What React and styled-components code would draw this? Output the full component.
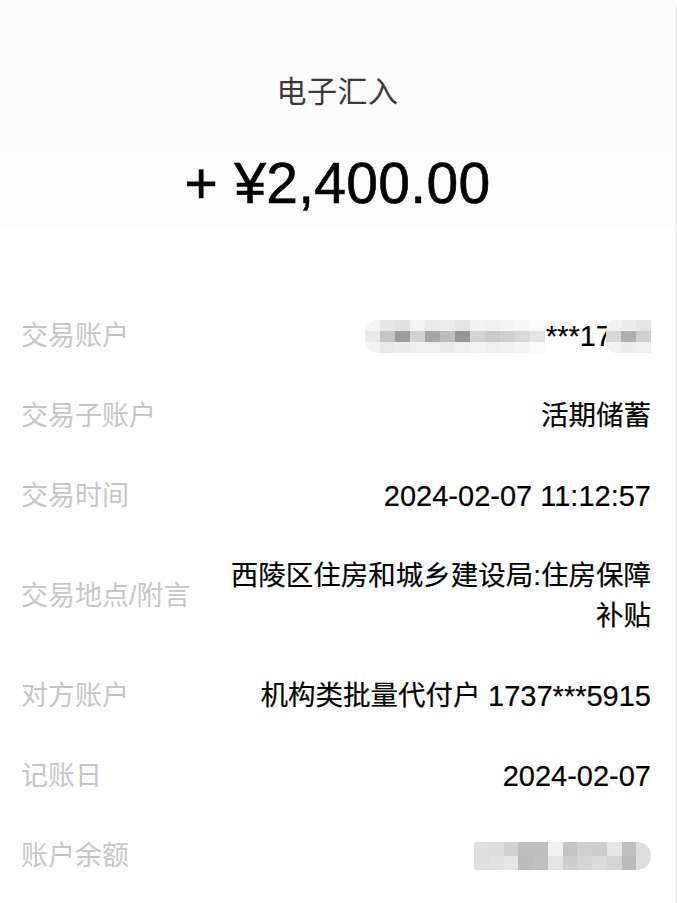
import React from "react";
import styled, { createGlobalStyle } from "styled-components";

const Global = createGlobalStyle`
  html, body { margin: 0; padding: 0; background: #ffffff; }
  body { font-family: "Liberation Sans", "Noto Sans CJK SC", sans-serif; }
`;

const Page = styled.div`
  width: 677px;
  min-height: 903px;
  box-sizing: border-box;
  border-right: 2px solid #f1f1f1;
  border-top-right-radius: 8px;
  background: #ffffff;
  overflow: hidden;
`;

const Header = styled.header`
  display: flex;
  flex-direction: column;
  align-items: center;
  gap: 39px;
  padding: 72px 0 12px;
  height: 227px;
  box-sizing: border-box;
  background: linear-gradient(#fbfbfb, #fdfdfd);
`;

const Title = styled.div`
  font-family: "Liberation Sans", "Noto Sans CJK SC", sans-serif;
  font-size: 30px;
  line-height: 40px;
  color: #3a3a3a;
  letter-spacing: 0.5px;
`;

const Amount = styled.div`
  font-family: "Liberation Sans", "Noto Sans CJK SC", sans-serif;
  font-size: 57px;
  line-height: 64px;
  color: #000000;
  letter-spacing: 0.3px;
  -webkit-text-stroke: 0.6px #000000;
`;

const List = styled.section`
  display: flex;
  flex-direction: column;
  padding: 69px 24px 0 21px;
`;

const Row = styled.div`
  display: flex;
  align-items: center;
  justify-content: space-between;
  gap: 24px;
  padding: 20px 0;
`;

const Label = styled.div`
  flex: none;
  font-family: "Liberation Sans", "Noto Sans CJK SC", sans-serif;
  font-size: 27px;
  line-height: 40px;
  color: #c6c6c6;
  white-space: nowrap;
`;

const Value = styled.div`
  flex: 1;
  text-align: right;
  font-family: "Liberation Sans", "Noto Sans CJK SC", sans-serif;
  font-size: 27.5px;
  line-height: 40px;
  color: #000000;
  display: flex;
  justify-content: flex-end;
  align-items: center;
  -webkit-text-stroke: 0.2px #000000;
`;

const Wrap = styled.span`
  display: block;
  max-width: 425px;
`;

const Num = styled.span`
  font-size: 29px;
`;

const Blur = styled.div`
  position: relative;
  display: grid;
  grid-template-columns: repeat(${(p) => p.$cols}, ${(p) => p.$cw}px);
  grid-auto-rows: ${(p) => p.$rh}px;
  border-radius: ${(p) => p.$radius};
  margin-left: ${(p) => p.$overlap || 0}px;
  overflow: hidden;
  flex: none;
`;

const Cell = styled.span`
  display: block;
`;

const Stars = styled.span`
  font-size: 29px;
  margin-left: 1px;
`;

function PixelBlur({ rows, cw, rh, radius, overlap }) {
  const cols = rows[0].length;
  return (
    <Blur $cols={cols} $cw={cw} $rh={rh} $radius={radius} $overlap={overlap}>
      {rows.flatMap((r, i) =>
        r.map((c, j) => <Cell key={i + "-" + j} style={{ background: c }} />)
      )}
    </Blur>
  );
}

const acct1 = [
  ["#f4f4f4", "#e6e6e6", "#e2e2e2", "#f3f3f3", "#eaeaea", "#ededed", "#e5e5e5", "#f2f2f2", "#f0f0f0", "#f4f4f4", "#f7f7f7", "#fafafa"],
  ["#e8e8e8", "#c4c4c4", "#9c9c9c", "#d2d2d2", "#a6a6a6", "#bcbcbc", "#959595", "#d4d4d4", "#cacaca", "#d0d0d0", "#d8d8d8", "#e4e4e4"],
  ["#f3f3f3", "#e9e9e9", "#ececec", "#f0f0f0", "#eeeeee", "#ebebeb", "#efefef", "#f3f3f3", "#eeeeee", "#f1f1f1", "#f5f5f5", "#fafafa"],
];

const acct2 = [
  ["#f1f1f1", "#ececec", "#e4e4e4"],
  ["#d6d6d6", "#aeaeae", "#cfcfcf"],
  ["#f3f3f3", "#ececec", "#f0f0f0"],
];

const balance = [
  ["#dedede", "#dcdcdc", "#d2d2d2", "#bdbdbd", "#bebebe", "#f0f0f0", "#c4c4c4", "#cfcfcf", "#cdcdcd", "#e6e6e6", "#bfbfbf", "#dedede"],
  ["#dedede", "#e2e2e2", "#e6e6e6", "#bcbcbc", "#bfbfbf", "#e4e4e4", "#cdcdcd", "#d4d4d4", "#dbdbdb", "#d4d4d4", "#b9b9b9", "#dedede"],
];

export default function App() {
  return (
    <>
      <Global />
      <Page>
        <Header>
          <Title>电子汇入</Title>
          <Amount>+ ¥2,400.00</Amount>
        </Header>
        <List>
          <Row>
            <Label>交易账户</Label>
            <Value>
              <PixelBlur rows={acct1} cw={15} rh={11} radius="14px 4px 4px 14px" />
              <Stars>***17</Stars>
              <PixelBlur rows={acct2} cw={15} rh={11} radius="10px 0 0 10px" overlap={-6} />
            </Value>
          </Row>
          <Row>
            <Label>交易子账户</Label>
            <Value>活期储蓄</Value>
          </Row>
          <Row>
            <Label>交易时间</Label>
            <Value>
              <Num>2024-02-07 11:12:57</Num>
            </Value>
          </Row>
          <Row>
            <Label>交易地点/附言</Label>
            <Value>
              <Wrap>西陵区住房和城乡建设局:住房保障补贴</Wrap>
            </Value>
          </Row>
          <Row>
            <Label>对方账户</Label>
            <Value>
              机构类批量代付户&nbsp;<Num>1737***5915</Num>
            </Value>
          </Row>
          <Row>
            <Label>记账日</Label>
            <Value>
              <Num>2024-02-07</Num>
            </Value>
          </Row>
          <Row>
            <Label>账户余额</Label>
            <Value>
              <PixelBlur rows={balance} cw={14.75} rh={14} radius="0 14px 14px 0" />
            </Value>
          </Row>
        </List>
      </Page>
    </>
  );
}
